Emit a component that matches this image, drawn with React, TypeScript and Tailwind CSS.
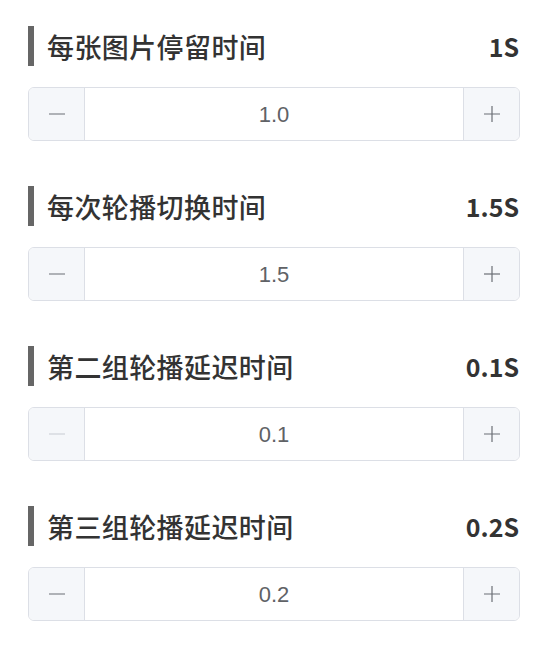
import React from "react";

type Item = { title: string; value: string; num: string; minDisabled?: boolean };

const items: Item[] = [
  { title: "每张图片停留时间", value: "1S", num: "1.0" },
  { title: "每次轮播切换时间", value: "1.5S", num: "1.5" },
  { title: "第二组轮播延迟时间", value: "0.1S", num: "0.1", minDisabled: true },
  { title: "第三组轮播延迟时间", value: "0.2S", num: "0.2" },
];

const font = { fontFamily: '"Noto Sans CJK SC", "Noto Sans", sans-serif' };

function Minus({ disabled }: { disabled?: boolean }) {
  return (
    <svg width="18" height="18" viewBox="0 0 18 18">
      <line x1="1" y1="9" x2="17" y2="9" stroke={disabled ? "#c8cbd2" : "#6b6e75"} strokeWidth="1.2" />
    </svg>
  );
}

function Plus() {
  return (
    <svg width="18" height="18" viewBox="0 0 18 18">
      <line x1="1" y1="9" x2="17" y2="9" stroke="#6b6e75" strokeWidth="1.2" />
      <line x1="9" y1="1" x2="9" y2="17" stroke="#6b6e75" strokeWidth="1.2" />
    </svg>
  );
}

export default function App() {
  return (
    <div className="w-[546px] h-[660px] bg-white pl-[28px] pr-[26px] pt-[26px]" style={font}>
      {items.map((it, i) => (
        <div key={i} className={i > 0 ? "mt-[45px]" : ""}>
          <div className="flex items-center h-[40px]">
            <div className="w-[6px] h-[40px] bg-[#666666]" />
            <div className="ml-[13px] text-[27px] leading-none font-medium text-[#333333] tracking-[0.4px]">
              {it.title}
            </div>
            <div className="ml-auto text-[25px] leading-none font-bold text-[#333333] pr-[1px]">
              {it.value}
            </div>
          </div>
          <div className="mt-[21px] h-[54px] flex border border-[#dcdfe6] rounded-[6px] overflow-hidden">
            <div className="w-[56px] bg-[#f5f7fa] border-r border-[#dcdfe6] flex items-center justify-center">
              <Minus disabled={it.minDisabled} />
            </div>
            <div
              className="flex-1 flex items-center justify-center text-[22px] text-[#606266] bg-white"
              style={{ fontFamily: '"Liberation Sans", Arial, sans-serif' }}
            >
              {it.num}
            </div>
            <div className="w-[56px] bg-[#f5f7fa] border-l border-[#dcdfe6] flex items-center justify-center">
              <Plus />
            </div>
          </div>
        </div>
      ))}
    </div>
  );
}
